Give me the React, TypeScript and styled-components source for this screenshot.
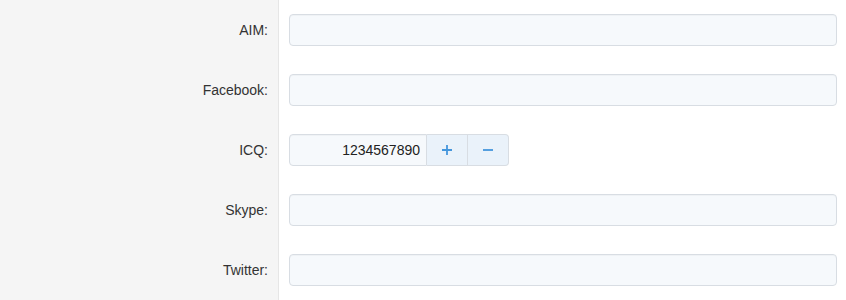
import React from 'react';
import styled, { createGlobalStyle } from 'styled-components';

const GlobalStyle = createGlobalStyle`
  html, body {
    margin: 0;
    padding: 0;
    background: #ffffff;
    font-family: "Liberation Sans", Arial, sans-serif;
  }
`;

const Form = styled.div`
  display: flex;
  flex-direction: column;
  width: 846px;
  height: 300px;
  overflow: hidden;
`;

const Row = styled.div`
  display: grid;
  grid-template-columns: 279px 1fr;
  height: 60px;
  flex-shrink: 0;
`;

const Label = styled.label`
  display: flex;
  align-items: center;
  justify-content: flex-end;
  padding-right: 10px;
  background: #f5f5f5;
  border-right: 1px solid #e6e6e6;
  font-size: 14px;
  color: #333333;
`;

const Field = styled.div`
  display: flex;
  align-items: center;
  padding: 0 9px 0 10px;
`;

const TextInput = styled.input<{ $width?: number }>`
  box-sizing: border-box;
  height: 32px;
  width: ${({ $width }) => ($width ? `${$width}px` : '100%')};
  border: 1px solid #d8dde3;
  border-radius: ${({ $width }) => ($width ? '4px 0 0 4px' : '4px')};
  background: #f6f9fc;
  box-shadow: inset 0 1px 1px rgba(0, 0, 0, 0.03);
  font-family: inherit;
  font-size: 14px;
  color: #222222;
  padding: 0 6px;
  text-align: ${({ $width }) => ($width ? 'right' : 'left')};
  outline: none;
`;

const Spinner = styled.div`
  display: flex;
  align-items: stretch;
  height: 32px;
`;

const StepButton = styled.button<{ $last?: boolean }>`
  box-sizing: border-box;
  width: 41px;
  height: 32px;
  display: flex;
  align-items: center;
  justify-content: center;
  padding: 0;
  border: 1px solid #d8dde3;
  border-left: none;
  border-radius: ${({ $last }) => ($last ? '0 4px 4px 0' : '0')};
  background: #eaf2fa;
  color: #4596dc;
  cursor: pointer;
`;

const fields = ['AIM:', 'Facebook:', 'ICQ:', 'Skype:', 'Twitter:'];

export default function App() {
  return (
    <>
      <GlobalStyle />
      <Form>
        {fields.map((name) => (
          <Row key={name}>
            <Label>{name}</Label>
            <Field>
              {name === 'ICQ:' ? (
                <Spinner>
                  <TextInput $width={138} defaultValue="1234567890" />
                  <StepButton aria-label="increase">
                    <svg width="12" height="12" viewBox="0 0 12 12">
                      <path d="M6 1v10M1 6h10" stroke="currentColor" strokeWidth="1.8" />
                    </svg>
                  </StepButton>
                  <StepButton $last aria-label="decrease">
                    <svg width="12" height="12" viewBox="0 0 12 12">
                      <path d="M1 6h10" stroke="currentColor" strokeWidth="1.8" />
                    </svg>
                  </StepButton>
                </Spinner>
              ) : (
                <TextInput />
              )}
            </Field>
          </Row>
        ))}
      </Form>
    </>
  );
}
